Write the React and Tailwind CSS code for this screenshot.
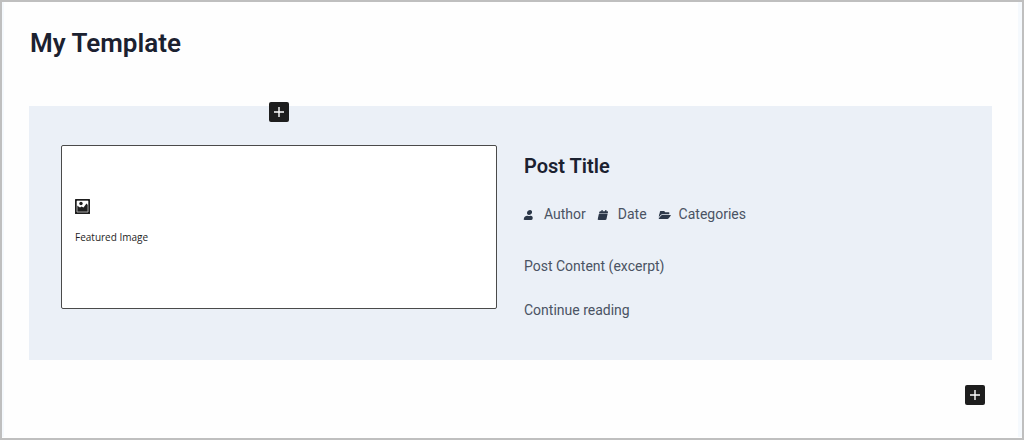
import { FaCalendar, FaFolderOpen, FaUser } from 'react-icons/fa'

const meta = [
    { name: 'Author', icon: FaUser, size: 'h-[10px] w-[10px]', gap: 'gap-[10px]' },
    { name: 'Date', icon: FaCalendar, size: 'h-[10px] w-[10px]', gap: 'gap-[10px]' },
    { name: 'Categories', icon: FaFolderOpen, size: 'h-3 w-3', gap: 'gap-2' },
]

function AddButton({ label, className = '' }) {
    return (
        <button
            type="button"
            aria-label={label}
            className={`flex h-5 w-5 items-center justify-center rounded-xs bg-[#1e1e1e] text-white ${className}`}
        >
            <svg viewBox="0 0 12 12" className="h-3 w-3" aria-hidden="true">
                <path d="M6 1v10M1 6h10" stroke="currentColor" strokeWidth="1.4" fill="none" />
            </svg>
        </button>
    )
}

function ImageIcon() {
    return (
        <svg viewBox="0 0 15 15" className="h-[15px] w-[15px]" aria-hidden="true">
            <rect width="15" height="15" rx="0.5" fill="#1e1e1e" />
            <path d="M2 2h11v11H2z" fill="none" stroke="#b5b5b5" strokeWidth="0.9" />
            <path d="M2 2h11v4l-1.500-1.500-3 4-2-1L5 8.500 2 6.500z" fill="#fff" />
            <circle cx="6" cy="4.500" r="1.700" fill="#1e1e1e" />
        </svg>
    )
}

function App() {
    return (
        <div className="min-h-screen border-2 border-[#bfbfbf] bg-[#fefefe] font-['Roboto',sans-serif]">
            <main className="border-l-2 border-r-4 border-[#f5f9fd] pt-6 pr-[26px] pb-8 pl-[25px]">
                <h1 className="pl-px text-[26px] leading-[34px] font-semibold text-[#1b2130]">My Template</h1>

                <section className="mt-[46px] grid grid-cols-2 items-start gap-[27px] bg-[#ebf0f7] px-8 pt-[39px] pb-10">
                    <div className="relative">
                        <AddButton label="Add block before" className="absolute -top-[43px] left-1/2 -translate-x-1/2" />
                        <div className="rounded-xs border border-[#4a4a4a] bg-white pt-[53px] pr-[13px] pb-[63px] pl-[13px]">
                            <ImageIcon />
                            <p className="mt-[15px] font-['Open_Sans',sans-serif] text-[10px] leading-4 text-[#1e1e1e]">
                                Featured Image
                            </p>
                        </div>
                    </div>

                    <article className="pt-[7px] text-[14px] leading-5 text-[#4a5363]">
                        <h2 className="text-[20px] leading-7 font-semibold text-[#1b2130]">Post Title</h2>
                        <ul className="mt-6 flex gap-3">
                            {meta.map((item) => (
                                <li key={item.name} className={`flex items-center ${item.gap}`}>
                                    <item.icon className={`${item.size} mt-0.5 -skew-x-12 text-[#2c3849]`} aria-hidden="true" />
                                    <span>{item.name}</span>
                                </li>
                            ))}
                        </ul>
                        <p className="mt-8">Post Content (excerpt)</p>
                        <p className="mt-6">
                            <a href="#">Continue reading</a>
                        </p>
                    </article>
                </section>

                <div className="mt-[25px] flex justify-end pr-[7px]">
                    <AddButton label="Add block" />
                </div>
            </main>
        </div>
    )
}

export default App
